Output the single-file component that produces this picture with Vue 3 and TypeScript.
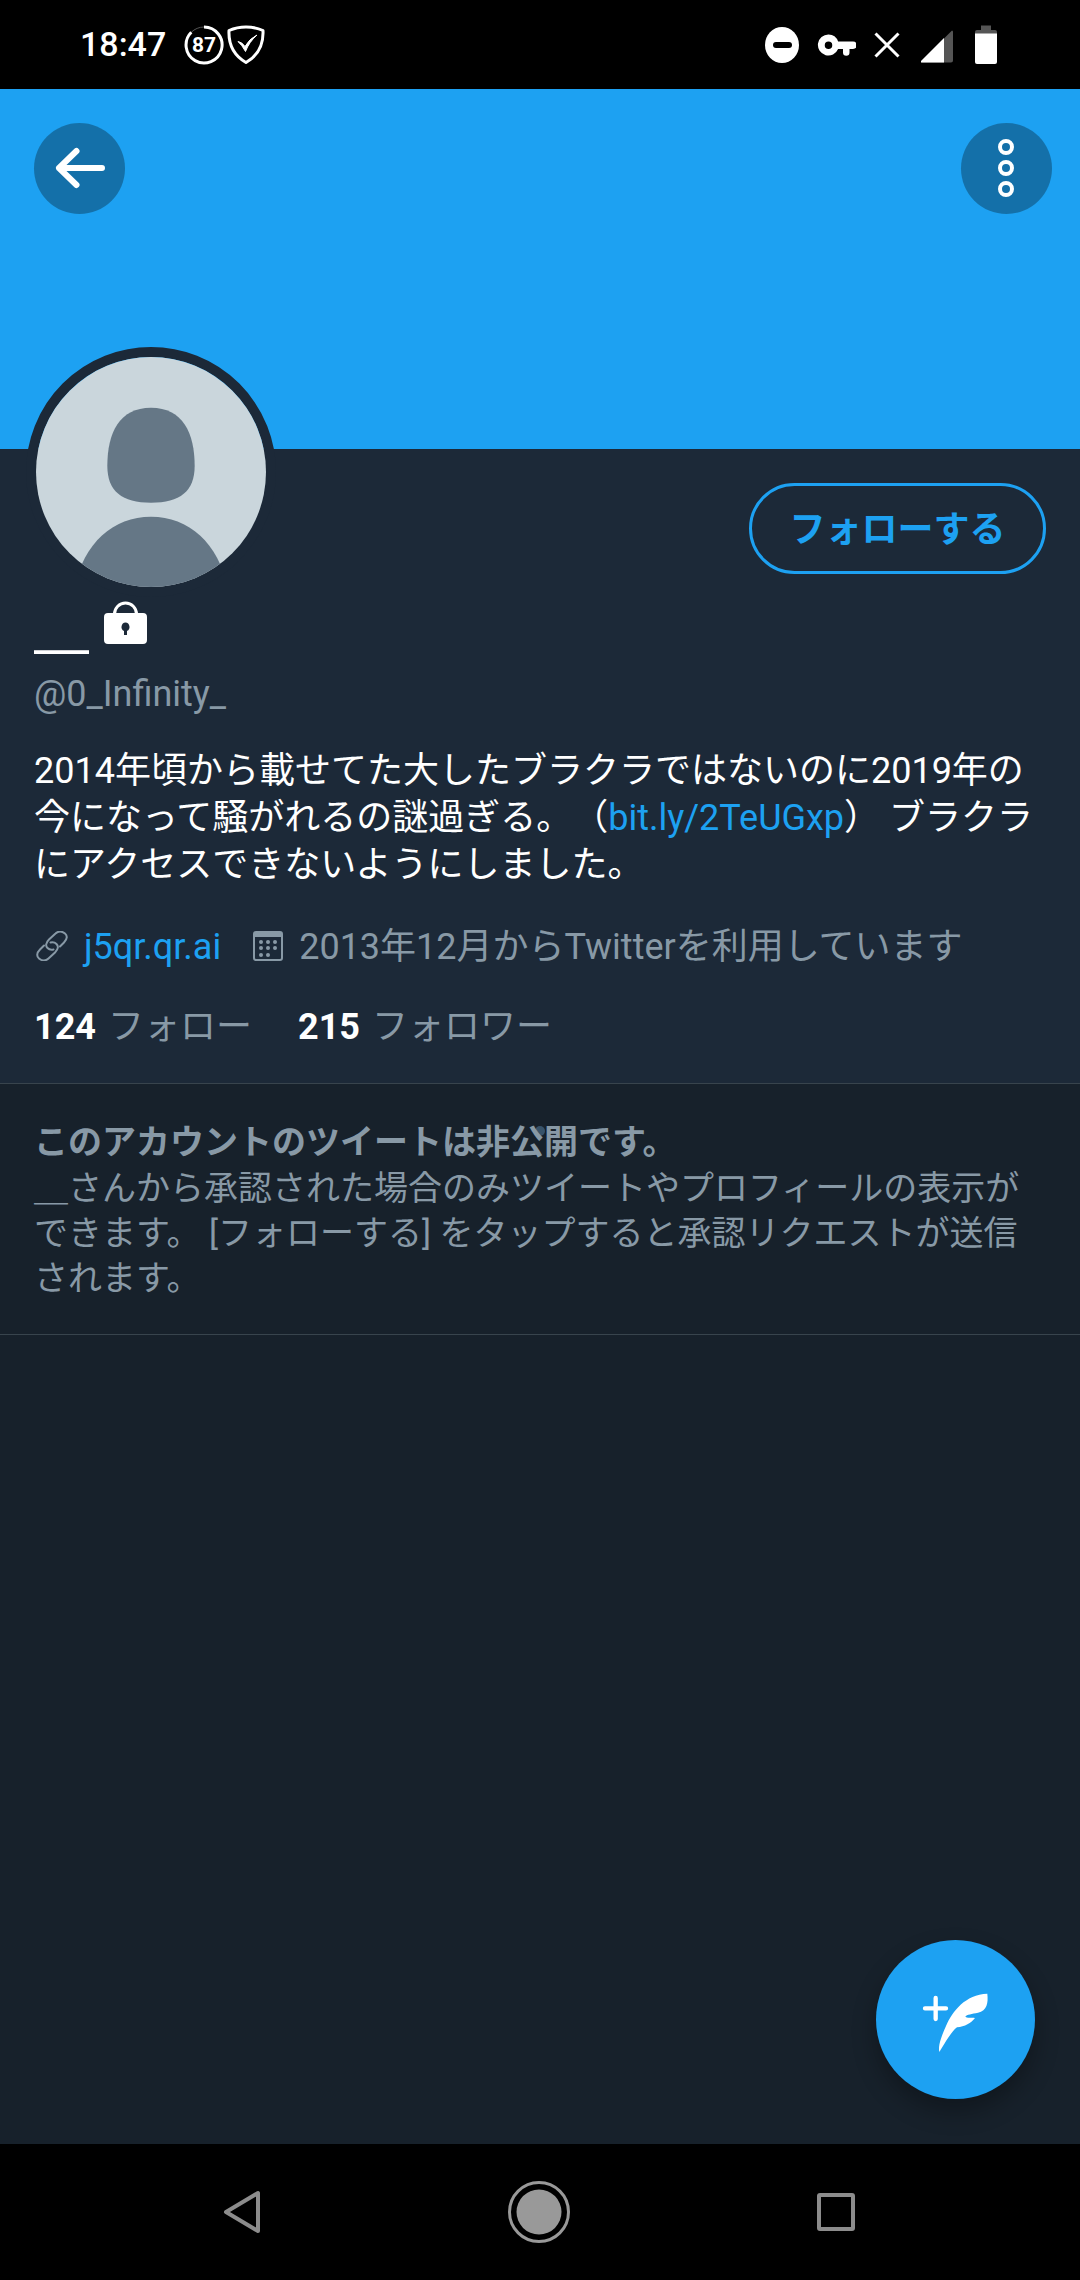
<script setup lang="ts">
interface Count {
  value: number
  label: string
}

const battery = 87
const bioBefore = '2014年頃から載せてた大したブラクラではないのに2019年の今になって騒がれるの謎過ぎる。（'
const bioAfter = '） ブラクラにアクセスできないようにしました。'
const counts: Count[] = [
  { value: 124, label: 'フォロー' },
  { value: 215, label: 'フォロワー' },
]
const calendarDots: [number, number][] = [
  [8, 11], [15, 11], [22, 11],
  [8, 17], [15, 17], [22, 17],
  [8, 24], [15, 24],
]
</script>

<template>
  <div class="screen" lang="ja">
    <header class="status">
      <div class="status-left">
        <time class="clock">18:47</time>
        <svg class="ring" width="40" height="40" viewBox="0 0 40 40">
          <circle cx="20" cy="20" r="18" fill="none" stroke="#555" stroke-width="1" />
          <path d="M20 2A18 18 0 1 1 7.3 7.3" fill="none" stroke="#fff" stroke-width="3" />
          <text x="20" y="27" text-anchor="middle" class="ring-text">{{ battery }}</text>
        </svg>
        <svg width="38" height="40" viewBox="0 0 38 40">
          <path d="M19 2Q28 2 36 5.500Q37 27 19 37.500Q1 27 2 5.500Q10 2 19 2Z" fill="none" stroke="#fff" stroke-width="3" stroke-linejoin="round" />
          <path d="M11 16.500Q15 17 18 21.500Q22 14 30 10Q22 17 18.500 26.500Q15 20 11 16.500Z" fill="#fff" stroke="#fff" stroke-width="1" />
        </svg>
      </div>
      <div class="status-right">
        <svg width="35" height="40" viewBox="0 0 35 40">
          <ellipse cx="18" cy="20" rx="17" ry="18" fill="#fff" />
          <rect x="9" y="17" width="19" height="6" rx="3" fill="#000" />
        </svg>
        <svg width="39" height="40" viewBox="0 0 39 40">
          <path fill="#fff" fill-rule="evenodd" d="M11.500 9.500a10.500 10.500 0 1 0 9.600 14.500H26v3.500a3 3 0 0 0 6.500 0V24H36a3.500 3.500 0 0 0 0-7.500H21.100A10.500 10.500 0 0 0 11.500 9.500ZM11.500 16.500a3.500 3.500 0 1 1 0 7.500 3.500 3.500 0 0 1 0-7.500Z" />
        </svg>
        <svg width="29" height="40" viewBox="0 0 29 40">
          <path d="M1.500 8.500L24.500 31.500M24.500 8.500L1.500 31.500" stroke="#fff" stroke-width="3" />
        </svg>
        <svg width="36" height="40" viewBox="2 0 36 40">
          <path d="M2 36.500L33 5.500Q34 5.500 34 7V35.500Q34 37.500 32 37.500H3Q1.500 37.500 2 36.500Z" fill="#555" />
          <path d="M2 36L25 13V37.500H3Q1.500 37.500 2 36Z" fill="#fff" />
        </svg>
        <svg width="22" height="40" viewBox="0 0 22 40">
          <path d="M6 0.500H16V5H20Q22 5 22 7V9H0V7Q0 5 2 5H6Z" fill="#555" />
          <path d="M0 8.500H22V37Q22 39 20 39H2Q0 39 0 37Z" fill="#fff" />
        </svg>
      </div>
    </header>

    <main class="content">
      <section class="banner">
        <button class="round" type="button" aria-label="戻る">
          <svg width="91" height="91" viewBox="0 0 91 91">
            <path d="M68 45H25M42.500 28L25 45L42.500 62" fill="none" stroke="#fff" stroke-width="6" stroke-linecap="round" stroke-linejoin="round" />
          </svg>
        </button>
        <button class="round" type="button" aria-label="その他">
          <svg width="91" height="91" viewBox="0 0 91 91">
            <g fill="none" stroke="#fff" stroke-width="4">
              <circle cx="45" cy="24" r="6" />
              <circle cx="45" cy="45" r="6" />
              <circle cx="45" cy="66" r="6" />
            </g>
          </svg>
        </button>
      </section>

      <section class="profile">
        <div class="profile-top">
          <svg class="avatar" width="230" height="230" viewBox="108 81 690 690">
            <rect x="108" y="81" width="690" height="690" fill="#cad6dc" />
            <path d="M453 233C548 233 584 308 584 408C584 484 540 518 453 518C366 518 322 484 322 408C322 308 358 233 453 233Z" fill="#657786" />
            <path d="M224 771C250 640 340 560 453 560C566 560 656 640 682 771Z" fill="#657786" />
          </svg>
          <button class="follow" type="button">フォローする</button>
        </div>

        <h1 class="name">
          <span>＿</span>
          <svg width="43" height="44" viewBox="0 0 43 44">
            <path d="M10.500 13A11 11 0 0 1 32.500 13" fill="none" stroke="#fff" stroke-width="3" />
            <path fill="#fff" fill-rule="evenodd" d="M4 12H39Q43 12 43 16V39Q43 43 39 43H4Q0 43 0 39V16Q0 12 4 12ZM21.500 21.500a4.500 4.500 0 0 0-1.500 8.500V34h3V30a4.500 4.500 0 0 0-1.500-8.500Z" />
          </svg>
        </h1>
        <p class="handle">@0_Infinity_</p>

        <p class="bio">{{ bioBefore }}<a href="#">bit.ly/2TeUGxp</a>{{ bioAfter }}</p>

        <div class="meta">
          <svg width="34" height="30" viewBox="-3 0 34 30">
            <g fill="none" stroke="#8899a6" stroke-width="2" stroke-linecap="round">
              <path d="M23 15.500L27 11.500C30.500 8 30.500 4.500 28 2.500C25 0 21 0 18.500 2.500L12 8.500C8.500 12 8.500 15 10.500 17C12.500 19 14.500 19 16.500 18.500" />
              <path d="M7 14.500L3 18.500C-0.500 22 -0.500 25.500 2 27.500C5 30 9 30 11.500 27.500L18 21.500C21.500 18 21.500 15 19.500 13C17.500 11 15.500 11 13.500 11.500" />
            </g>
          </svg>
          <a class="site" href="#">j5qr.qr.ai</a>
          <svg width="30" height="30" viewBox="0 0 30 30">
            <rect x="1" y="1" width="28" height="28" rx="2" fill="none" stroke="#8899a6" stroke-width="2" />
            <rect x="1" y="1" width="28" height="5" fill="#8899a6" />
            <circle v-for="(dot, i) in calendarDots" :key="i" :cx="dot[0]" :cy="dot[1]" r="2" fill="#8899a6" />
          </svg>
          <span class="joined">2013年12月からTwitterを利用しています</span>
        </div>

        <div class="counts">
          <span v-for="count in counts" :key="count.label"><b>{{ count.value }}</b>{{ count.label }}</span>
        </div>
      </section>

      <section class="notice">
        <span class="spinner-dot"></span>
        <h2>このアカウントのツイートは非公開です。</h2>
        <p>＿さんから承認された場合のみツイートやプロフィールの表示ができます。 [フォローする] をタップすると承認リクエストが送信されます。</p>
      </section>
    </main>

    <button class="compose" type="button" aria-label="ツイートする">
      <svg width="159" height="159" viewBox="108 120 477 477">
        <path d="M287 294V357M255 325H318" stroke="#fff" stroke-width="13" stroke-linecap="round" />
        <path d="M298 456C294 438 302 414 318 378C338 332 376 284 442 281C445 309 441 332 414 338C396 342 380 343 376 350C382 356 396 351 405 354C394 369 374 380 351 382C334 395 318 424 298 456Z" fill="#fff" />
      </svg>
    </button>

    <nav class="navbar">
      <button type="button" aria-label="戻る">
        <svg width="64" height="64" viewBox="0 0 64 64">
          <path d="M47 13V51L15 32Z" fill="none" stroke="#8c8c8c" stroke-width="4" stroke-linejoin="round" />
        </svg>
      </button>
      <button type="button" aria-label="ホーム">
        <svg width="64" height="64" viewBox="0 0 64 64">
          <circle cx="31" cy="32" r="29.500" fill="none" stroke="#999" stroke-width="3" />
          <circle cx="31" cy="32" r="22.500" fill="#999" />
        </svg>
      </button>
      <button type="button" aria-label="アプリ履歴">
        <svg width="64" height="64" viewBox="0 0 64 64">
          <rect x="14" y="15" width="34" height="34" rx="1" fill="none" stroke="#8c8c8c" stroke-width="4" />
        </svg>
      </button>
    </nav>
  </div>
</template>

<style>
body {
  margin: 0;
  background: #17212b;
}
</style>

<style scoped>
.screen {
  display: flex;
  flex-direction: column;
  min-height: 100vh;
  background: #17212b;
  color: #8899a6;
  font-family: Roboto, "Noto Sans CJK JP", sans-serif;
  font-size: 36px;
  line-height: 47px;
  text-spacing-trim: space-all;
}

svg {
  display: block;
  flex: none;
}

button {
  padding: 0;
  border: 0;
  background: none;
  font-family: inherit;
  cursor: pointer;
}

h1,
h2,
p {
  margin: 0;
}

a {
  color: #1da1f2;
  text-decoration: none;
}

.status {
  display: flex;
  align-items: center;
  justify-content: space-between;
  box-sizing: border-box;
  height: 89px;
  padding: 0 83px 0 80px;
  background: #000;
  color: #fff;
}

.status-left,
.status-right {
  display: flex;
  align-items: center;
}

.status-right {
  gap: 18px;
}

.clock {
  font-size: 34px;
  font-weight: 500;
}

.ring {
  margin: 0 3px 0 18px;
}

.ring-text {
  fill: #fff;
  font-size: 21px;
  font-weight: 700;
}

.content {
  flex: 1;
}

.banner {
  display: flex;
  justify-content: space-between;
  box-sizing: border-box;
  height: 360px;
  padding: 34px 28px 0 34px;
  background: #1da1f2;
}

.round {
  width: 91px;
  height: 91px;
  border-radius: 50%;
  background: rgba(0, 0, 0, 0.3);
}

.profile {
  padding: 0 34px 32px;
  border-bottom: 1px solid #38444d;
  background: #1c2938;
}

.profile-top {
  display: flex;
  justify-content: space-between;
  align-items: flex-start;
}

.avatar {
  margin: -102px 0 0 -8px;
  border: 10px solid #1c2938;
  border-radius: 50%;
}

.follow {
  box-sizing: border-box;
  width: 297px;
  height: 91px;
  margin-top: 34px;
  padding-bottom: 6px;
  border: 3px solid #1da1f2;
  border-radius: 46px;
  color: #1da1f2;
  font-size: 36px;
  font-weight: 700;
}

.name {
  display: flex;
  gap: 15px;
  height: 74px;
  color: #fff;
  font-size: 55px;
  font-weight: 900;
  line-height: 60px;
  text-shadow: 0 1px currentColor;
}

.name svg {
  margin-top: 4px;
}

.bio {
  margin-top: 30px;
  color: #fff;
}

.meta {
  display: flex;
  align-items: center;
  margin-top: 35px;
}

.meta svg {
  margin-bottom: 4px;
}

.site {
  margin: 0 32px 0 16px;
}

.joined {
  margin-left: 16px;
}

.counts {
  display: flex;
  gap: 46px;
  margin-top: 33px;
}

.counts b {
  margin-right: 12px;
  color: #fff;
}

.notice {
  position: relative;
  z-index: 0;
  padding: 36px 34px 33px;
  border-bottom: 1px solid #38444d;
  font-size: 34px;
  line-height: 45px;
}

.notice h2 {
  margin-bottom: 1px;
  font-size: 34px;
}

.spinner-dot {
  position: absolute;
  z-index: -1;
  top: 42px;
  left: 50%;
  width: 10px;
  height: 10px;
  margin-left: -5px;
  border-radius: 50%;
  background: #38536a;
}

.compose {
  position: fixed;
  right: 45px;
  bottom: 181px;
  width: 159px;
  height: 159px;
  border-radius: 50%;
  background: #1da1f2;
  box-shadow: 0 12px 24px rgba(0, 0, 0, 0.3);
}

.navbar {
  display: grid;
  grid-template-columns: repeat(3, 1fr);
  height: 136px;
  padding: 0 94px;
  background: #000;
}

.navbar button {
  display: flex;
  align-items: center;
  justify-content: center;
}
</style>
